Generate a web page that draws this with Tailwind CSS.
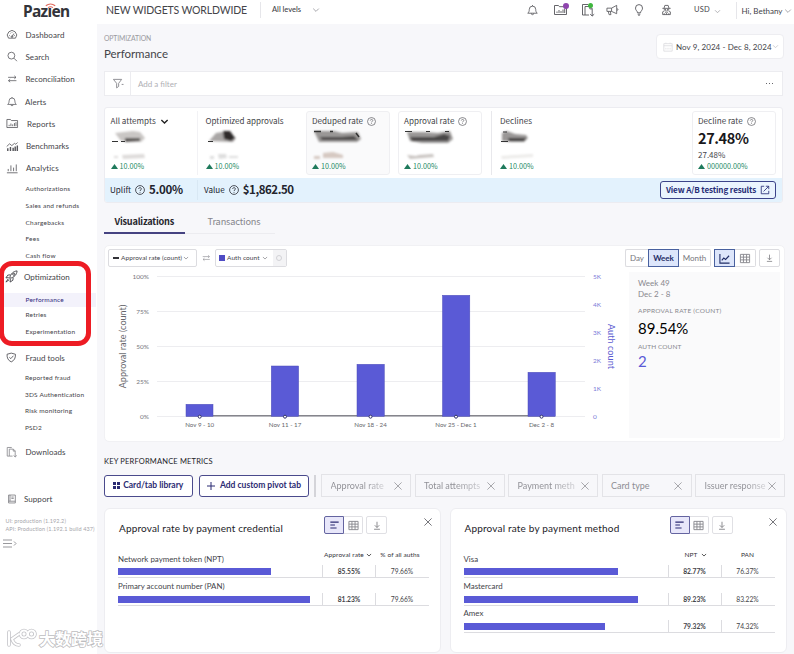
<!DOCTYPE html>
<html lang="en">

<head>
    <meta charset="UTF-8" />
    <title>Performance | Pazien</title>
    <meta name="viewport" content="width=device-width, initial-scale=1.0" />
    <script src="https://cdn.jsdelivr.net/npm/@tailwindcss/browser@4"></script>
</head>

<body class="w-[794px] h-[654px] overflow-hidden bg-[#f7f7fa] text-[#444449] font-['Lato',sans-serif] leading-none">
    <!-- Icon sprite -->
    <svg class="hidden">
        <symbol id="i-gauge" viewBox="0 0 12 12"><path d="M2.2 10A5 5 0 1 1 9.8 10ZM6 8.4 8 5M2.8 7h.8M4 4.4l.5.5M6 3.3v.7M9.2 7h-.8" /><circle cx="6" cy="8.3" r=".9" /></symbol>
        <symbol id="i-search" viewBox="0 0 12 12"><circle cx="5" cy="5" r="3.9" /><path d="M7.9 7.9 11.5 11.5" /></symbol>
        <symbol id="i-swap" viewBox="0 0 12 12"><path d="M1 4h9.5M8.5 2.2 10.5 4 8.5 5.8M11 8H1.5M3.5 6.2 1.5 8l2 1.8" /></symbol>
        <symbol id="i-bell" viewBox="0 0 12 12"><path d="M.8 9.5h10.4C9.8 8.3 9.5 7 9.5 5.3a3.5 3.5 0 0 0-7 0c0 1.7-.3 3-1.7 4.2ZM6 1.8V.6M4.7 9.7a1.3 1.4 0 0 0 2.6 0" /></symbol>
        <symbol id="i-reports" viewBox="0 0 14 12"><path d="M13 10.5H1v-9h4l1 1.200h7ZM3.500 9V7.500M5.500 9V6M7.500 9V7M9.500 9V5.500M11.200 9V4.500" /></symbol>
        <symbol id="i-bench" viewBox="0 0 14 12"><path d="M.8 6 4 3l2.500 2L9.500 2.500l1.500 1 2-2" /><path stroke-width="1.600" d="M2 11V8M5 11V6.500M8 11V7.500M10.300 11V6M12.700 11V5" /></symbol>
        <symbol id="i-bars" viewBox="0 0 14 12"><path d="M1 10.800h12M2.500 9V6.500M5.500 9V2.500M8.500 9V5M11.500 9V1.500" /></symbol>
        <symbol id="i-rocket" viewBox="0 0 14 14"><path d="M5 9C6 4 9 1.300 13 1c-.3 4-3 7-8 8ZM5.800 5.200 3 5.500 1 8.500l3-.3M8.800 8.200 8.500 11l-3 2 .3-3.200M3.500 9.500 1 13l3.500-2.500" /><circle cx="9.500" cy="4.500" r="1.200" /></symbol>
        <symbol id="i-shield" viewBox="0 0 12 12"><path d="M6 1 10.800 2.300C11 6.500 9.500 9.500 6 11 2.500 9.500 1 6.500 1.200 2.300ZM3.800 5.700l1.700 1.600L8.500 4" /></symbol>
        <symbol id="i-download-doc" viewBox="0 0 14 14"><path d="M4 12H1.500V1.500H7M4 3.500h5l2.200 2.200V8M4 3.500V12h4M11.200 8v5M9.200 11.200l2 1.800 2-1.800M8.800 3.500v2.400h2.400" /></symbol>
        <symbol id="i-book" viewBox="0 0 12 12"><path d="M2 1h8.500v10H2ZM3.800 1v7.800M2 8.800h8.500M5.500 3.500h3M5.500 5.300h3" /></symbol>
        <symbol id="i-megaphone" viewBox="0 0 14 12"><path d="M1 4h5l5.500-3v9L6 7.500H1ZM2.500 7.500 3.300 11h2L4.700 7.500M6 4v3.500M12 4.500c1.200.2 1.200 1.800 0 2" /></symbol>
        <symbol id="i-bulb" viewBox="0 0 12 12"><path d="M4.500 8.800C4.500 7 2.500 6.500 2.500 4.100a3.500 3.500 0 0 1 7 0C9.500 6.500 7.500 7 7.500 8.800ZM4.700 10.200h2.600M5.400 11.500h1.200" /></symbol>
        <symbol id="i-spy" viewBox="0 0 12 12"><path d="M1.500 4.200h9M3.300 4 4.200 1h3.600l.9 3M3.500 4.500c0 3.500 5 3.500 5 0M3.700 6.800 1.800 8v3h8.400V8L8.300 6.800M4.500 8 6 9.500 7.500 8M6 9.500V11M3.500 11V9.500M8.500 11V9.500M4.200 5.400h1.300M6.500 5.400h1.300" /></symbol>
        <symbol id="i-down" viewBox="0 0 8 8"><path d="M1.200 2.600 4 5.400l2.800-2.800" /></symbol>
        <symbol id="i-x" viewBox="0 0 8 8"><path d="m.4.4 7.200 7.200M7.600.4.4 7.600" /></symbol>
        <symbol id="i-help" viewBox="0 0 12 12"><circle cx="6" cy="6" r="5.300" /><path d="M4.400 4.800c0-2.200 3.300-2.100 3.300-.1C7.700 5.900 6 5.900 6 7.200M6 8.300v1" /></symbol>
        <symbol id="i-filter" viewBox="0 0 12 12"><path d="M1 1.500h9L6.700 5.800v3.400l-2.200 1.600v-5ZM10 7h2" /></symbol>
        <symbol id="i-cal" viewBox="0 0 12 12"><path d="M1 2h10v9H1ZM1 4.500h10M3.500 2V.8M8.500 2V.8M3.500 7v2M6 7v2M8.500 7v2" /></symbol>
        <symbol id="i-table" viewBox="0 0 12 12"><path d="M1 1.500h10v9H1ZM1 4.500h10M1 7.500h10M4.300 1.500v9M7.700 1.500v9" /></symbol>
        <symbol id="i-save" viewBox="0 0 12 12"><path d="M6 1.500v6.800M3.300 5.700 6 8.400l2.700-2.700M2.500 10.500h7" /></symbol>
        <symbol id="i-line" viewBox="0 0 12 12"><path d="M1 1v10h10.500M3 8l2.200-2.500 2 1.500L11 3" /></symbol>
        <symbol id="i-hbars" viewBox="0 0 12 12"><path d="M1 2.500h10M1 6h5.500M1 9.500h7.500" /></symbol>
        <symbol id="i-open" viewBox="0 0 12 12"><path d="M5 1.500H1.500v9h9V7M7 1.500h3.500V5M10.500 1.500 4.300 7.700" /></symbol>
    </svg>

    <div class="flex h-[654px]">
        <!-- Sidebar -->
        <aside class="w-[97px] shrink-0 bg-white text-[8px]">
            <div class="relative h-[23px] pl-[23px] text-[15.500px] leading-[22px] font-bold tracking-[-0.700px] text-[#33343a] font-['Noto_Sans','Open_Sans',sans-serif]">
                Pazıen
                <svg class="absolute left-[45px] top-[3px] w-[11px] h-[6px]" viewBox="0 0 11 6" fill="none" stroke="#e0685c" stroke-width="1.100"><path d="M.8 2.800Q5.500-.8 10.200 2.800M3 4.600q2.500-1.600 5 0" /></svg>
            </div>
            <nav class="pt-[0.500px] stroke-[#55555a] fill-none [stroke-width:0.9]">
                <div class="flex items-center h-[22.300px] pl-[6px] gap-[7.500px]"><svg class="w-[12px] h-[11px]"><use href="#i-gauge" /></svg><span class="tracking-[0.100px]">Dashboard</span></div>
                <div class="flex items-center h-[22.300px] pl-[7px] gap-[8px]"><svg class="w-[10.500px] h-[11px]"><use href="#i-search" /></svg><span class="tracking-[0.050px]">Search</span></div>
                <div class="flex items-center h-[22.300px] pl-[7px] gap-[8px]"><svg class="w-[10.500px] h-[10px]"><use href="#i-swap" /></svg><span>Reconciliation</span></div>
                <div class="flex items-center h-[22.300px] pl-[7px] gap-[8px]"><svg class="w-[10px] h-[11px]"><use href="#i-bell" /></svg><span class="tracking-[0.100px]">Alerts</span></div>
                <div class="flex items-center h-[22.300px] pl-[6px] gap-[8.500px]"><svg class="w-[12.500px] h-[11px]"><use href="#i-reports" /></svg><span class="tracking-[0.150px]">Reports</span></div>
                <div class="flex items-center h-[22.300px] pl-[6px] gap-[7.500px]"><svg class="w-[12.500px] h-[11px]"><use href="#i-bench" /></svg><span>Benchmarks</span></div>
                <div class="flex items-center h-[22.300px] pl-[6px] gap-[7.500px]"><svg class="w-[12.500px] h-[11px]"><use href="#i-bars" /></svg><span class="tracking-[0.100px]">Analytics</span></div>
            </nav>
            <div class="pl-[25.500px] pt-[1.500px] text-[6.500px] tracking-[0.230px]">
                <div class="flex items-center h-[16.700px]">Authorizations</div>
                <div class="flex items-center h-[16.700px]">Sales and refunds</div>
                <div class="flex items-center h-[16.700px]">Chargebacks</div>
                <div class="flex items-center h-[16.700px]">Fees</div>
                <div class="flex items-center h-[16.700px]">Cash flow</div>
            </div>
            <div class="flex items-center h-[24px] pl-[5px] gap-[6px] fill-none stroke-[#44444a]"><svg class="w-[13px] h-[13px]"><use href="#i-rocket" /></svg><span>Optimization</span></div>
            <div class="mt-[4px] text-[6.500px] tracking-[0.180px]">
                <div class="flex items-center h-[14.500px] w-[96px] pl-[25.500px] bg-[#f3f2fb] text-[#2f2a7c]">Performance</div>
                <div class="flex items-center h-[16.700px] pl-[25.500px]">Retries</div>
                <div class="flex items-center h-[16.700px] pl-[25.500px]">Experimentation</div>
            </div>
            <div class="flex items-center h-[20px] mt-[7.500px] pl-[6px] gap-[9px] fill-none stroke-[#55555a]"><svg class="w-[10.500px] h-[11px]"><use href="#i-shield" /></svg><span>Fraud tools</span></div>
            <div class="pl-[25px] mt-[2px] text-[6.500px] tracking-[0.180px]">
                <div class="flex items-center h-[16.600px]">Reported fraud</div>
                <div class="flex items-center h-[16.600px]">3DS Authentication</div>
                <div class="flex items-center h-[16.600px]">Risk monitoring</div>
                <div class="flex items-center h-[16.600px]">PSD2</div>
            </div>
            <div class="flex items-center h-[20px] mt-[5.500px] pl-[6px] gap-[8px] fill-none stroke-[#88888c]"><svg class="w-[11.500px] h-[12px]"><use href="#i-download-doc" /></svg><span class="tracking-[0.050px]">Downloads</span></div>
            <div class="flex items-center h-[20px] mt-[27.500px] pl-[7px] gap-[7.500px] fill-none stroke-[#77777c]"><svg class="w-[9.500px] h-[10px]"><use href="#i-book" /></svg><span class="tracking-[0.050px]">Support</span></div>
            <div class="mt-[9px] pl-[5.500px] text-[5.500px] leading-[7.500px] whitespace-nowrap tracking-[0.120px] text-[#a5a5aa]">
                <div>UI: production (1.192.2)</div>
                <div>API: Production (1.192.1 build 437)</div>
            </div>
            <svg class="ml-[3px] mt-[6px] w-[15px] h-[9px]" fill="none" stroke="#99999d" stroke-width="1"><path d="M0 1h9M0 4.500h9M0 8h9M11 2.500l2 2-2 2" /></svg>
        </aside>

        <!-- Page -->
        <div class="flex-1 min-w-0">
            <header class="flex items-center h-[24px] pb-[4px] bg-white">
                <div class="w-[163px] pl-[9px] text-[10.500px] whitespace-nowrap tracking-[-0.150px]">NEW WIDGETS WORLDWIDE</div>
                <div class="flex items-center h-[16px] w-[267px] border-l border-[#e6e6ea] pl-[11px] text-[7.500px]">
                    <span class="w-[40px] font-medium">All levels</span>
                    <svg class="w-[8px] h-[8px] fill-none stroke-[#a8a8ad]"><use href="#i-down" /></svg>
                </div>
                <div class="flex items-center w-[151px] fill-none stroke-[#55555a] [stroke-width:0.9]">
                    <svg class="w-[11px] h-[12px]"><use href="#i-bell" /></svg>
                    <div class="relative ml-[15px]">
                        <svg class="w-[15px] h-[12px]"><use href="#i-reports" /></svg>
                        <span class="absolute -right-[1px] -top-[1px] size-[6px] rounded-full bg-[#8e44ad]"></span>
                    </div>
                    <div class="relative ml-[13px]">
                        <svg class="w-[14px] h-[14px]"><use href="#i-download-doc" /></svg>
                        <span class="absolute right-[2px] top-0 size-[5px] rounded-full bg-[#3fb63f]"></span>
                    </div>
                    <svg class="ml-[11px] w-[13px] h-[12px]"><use href="#i-megaphone" /></svg>
                    <svg class="ml-[14px] w-[12px] h-[12px]"><use href="#i-bulb" /></svg>
                    <svg class="ml-[16px] w-[11px] h-[12px]"><use href="#i-spy" /></svg>
                </div>
                <div class="flex items-center ml-[16px] w-[42px] text-[7.500px] tracking-[0.200px]">
                    USD
                    <svg class="ml-[4px] mt-[2px] w-[7px] h-[7px] fill-none stroke-[#a8a8ad]"><use href="#i-down" /></svg>
                </div>
                <div class="flex items-center h-[17px] border-l border-[#e6e6ea] pl-[4.500px] pt-[1px] text-[8px] whitespace-nowrap">
                    Hi, Bethany
                    <svg class="ml-[2px] w-[8px] h-[8px] fill-none stroke-[#a8a8ad]"><use href="#i-down" /></svg>
                </div>
            </header>

            <main class="pl-[7px]">
                <div class="flex h-[47px]">
                    <div class="w-[552px] pt-[11px]">
                        <div class="text-[6.800px] text-[#9a9aa0] tracking-[-0.100px]">OPTIMIZATION</div>
                        <h1 class="mt-[6px] text-[11.500px] tracking-[-0.050px]">Performance</h1>
                    </div>
                    <div class="flex items-center mt-[10px] h-[25px] w-[128px] rounded-sm border border-[#ededf1] bg-white pl-[6px] text-[8px] whitespace-nowrap">
                        <svg class="w-[10px] h-[10px] fill-none stroke-[#dcdce0]"><use href="#i-cal" /></svg>
                        <span class="ml-[3px] tracking-[0.080px]">Nov 9, 2024 - Dec 8, 2024</span>
                        <svg class="w-[7px] h-[7px] fill-none stroke-[#c8c8cd]"><use href="#i-down" /></svg>
                    </div>
                </div>

                <!-- Filter bar -->
                <div class="flex items-center h-[25px] w-[679px] border border-[#ececf0] bg-white text-[8px]">
                    <div class="flex items-center justify-center w-[26px] h-full border-r border-[#ececf0]"><svg class="w-[12px] h-[11px] fill-none stroke-[#88888d]"><use href="#i-filter" /></svg></div>
                    <span class="ml-[7px] flex-1 text-[#b0b0b5]">Add a filter</span>
                    <span class="mr-[9px] flex gap-[1.500px]"><i class="size-[1.500px] bg-[#66666b]"></i><i class="size-[1.500px] bg-[#66666b]"></i><i class="size-[1.500px] bg-[#66666b]"></i></span>
                </div>

                <!-- KPI strip -->
                <section class="mt-[11px] w-[679px] rounded-[3px] border border-[#ececf1] bg-white overflow-hidden whitespace-nowrap font-['Noto_Sans_CJK_SC',sans-serif] text-[8.100px]">
                    <div class="flex h-[70px] pt-[3px]">
                        <div class="w-[93px] h-[64px] pl-[5.500px] pt-[6px] border-r border-[#f2f2f5]">
                            <div class="flex items-center h-[9px]">All attempts<svg class="ml-[4px] w-[9px] h-[9px] fill-none stroke-[#222] [stroke-width:1.2]"><use href="#i-down" /></svg></div>
                            <svg class="w-[60px] h-[36px]"><g filter="url(#smudge)"><path fill="#c9c6c4" d="M4 7 22 5l7 1 5 6-4 4-20-1Z" /><path fill="#5a5654" d="M14 12h15v3l-15 1Z" /><path fill="#dedbda" d="M3 30h4v2H3ZM11 29l22-1 1 4-22 1Z" /></g><path stroke="#333" d="M1 15.500h6M10 15.500h4" /></svg>
                            <div class="flex items-center gap-[2px] h-[9px] text-[7.200px] text-[#1f8a66]"><svg class="w-[7px] h-[5px]" fill="#1f7a5c"><path d="M3.500 0 7 5H0Z" /></svg>10.00%</div>
                        </div>
                        <div class="w-[108px] pl-[7.500px] pt-[6px]">
                            <div class="flex items-center h-[9px]">Optimized approvals</div>
                            <svg class="w-[60px] h-[36px]"><g filter="url(#smudge)"><path fill="#a9a6a5" d="M3 15 10 7l12-2 8 7-3 4Z" /><path fill="#2e2b2a" d="M17 5h7l5 7-4 3-7-2Z" /><path fill="#dedede" d="M4 30h4v3H4ZM12 28l8 0 1 4-8 1ZM23 30h9v2H23Z" /></g><path stroke="#333" d="M2 15.500h5" /></svg>
                            <div class="flex items-center gap-[2px] h-[9px] text-[7.200px] text-[#1f8a66]"><svg class="w-[7px] h-[5px]" fill="#1f7a5c"><path d="M3.500 0 7 5H0Z" /></svg>10.00%</div>
                        </div>
                        <div class="w-[84px] h-[64px] pl-[5px] pt-[5px] rounded-[3px] border border-[#efeff2] bg-[#fafafb]">
                            <div class="flex items-center h-[9px]">Deduped rate<svg class="ml-[4px] w-[9px] h-[9px] fill-none stroke-[#66666b]"><use href="#i-help" /></svg></div>
                            <svg class="w-[60px] h-[36px]"><g filter="url(#smudge)"><path fill="#9a9796" d="M2 5 22 5l8 2 16-1 3 7-4 3-26 0-12 0Z" /><path fill="#4a4746" d="M8 11h22l12-1 4 4H10Z" /><path fill="#d6c9c2" d="M2 30h6v3H2ZM11 27l10-1 10 3 0 3H11Z" /></g><path stroke="#333" stroke-width="1.500" d="M2 5.500h7M18 5.500h3M44 7l3 4" /></svg>
                            <div class="flex items-center gap-[2px] h-[9px] text-[7.200px] text-[#1f8a66]"><svg class="w-[7px] h-[5px]" fill="#1f7a5c"><path d="M3.500 0 7 5H0Z" /></svg>10.00%</div>
                        </div>
                        <div class="w-[84px] h-[64px] ml-[8px] pl-[5px] pt-[5px] rounded-[3px] border border-[#efeff2]">
                            <div class="flex items-center h-[9px]">Approval rate<svg class="ml-[4px] w-[9px] h-[9px] fill-none stroke-[#66666b]"><use href="#i-help" /></svg></div>
                            <svg class="w-[60px] h-[36px]"><g filter="url(#smudge)"><path fill="#9a9796" d="M3 6 20 6l14 1 12-2 3 8-5 4-26 0-12-2Z" /><path fill="#4a4746" d="M6 11h24l10-3 6 2-2 5H8Z" /><path fill="#c9c4c1" d="M3 29 12 30l3-1 14-1 1 3-24 2Z" /></g><path stroke="#333" d="M1 5.500h7M22 5.500h4M41 5.500h4" /></svg>
                            <div class="flex items-center gap-[2px] h-[9px] text-[7.200px] text-[#1f8a66]"><svg class="w-[7px] h-[5px]" fill="#1f7a5c"><path d="M3.500 0 7 5H0Z" /></svg>10.00%</div>
                        </div>
                        <div class="w-[201px] h-[64px] ml-[9px] pl-[8px] pt-[6px] border-l border-[#e8e8ec]">
                            <div class="flex items-center h-[9px]">Declines</div>
                            <svg class="w-[60px] h-[36px]"><g filter="url(#smudge)"><path fill="#9a9796" d="M2 7l5-2 8 3 11 1 2 3-4 4-12 0-10-1Z" /><path fill="#3e3b3a" d="M8 12h18l-2 3H9Z" /><path fill="#ecebe9" d="M1 30l32-2v3L2 33Z" /></g><path stroke="#333" d="M1 15.500h7M3 6h4" /></svg>
                            <div class="flex items-center gap-[2px] h-[9px] text-[7.200px] text-[#1f8a66]"><svg class="w-[7px] h-[5px]" fill="#1f7a5c"><path d="M3.500 0 7 5H0Z" /></svg>10.00%</div>
                        </div>
                        <div class="w-[84px] h-[64px] pl-[5px] pt-[5px] rounded-[3px] border border-[#efeff2]">
                            <div class="flex items-center h-[9px]">Decline rate<svg class="ml-[4px] w-[9px] h-[9px] fill-none stroke-[#66666b]"><use href="#i-help" /></svg></div>
                            <div class="flex items-center h-[15px] mt-[5px] text-[14.500px] tracking-[-0.400px] font-bold text-[#18181b]">27.48%</div>
                            <div class="flex items-center h-[9px] mt-[4px] text-[8px]">27.48%</div>
                            <div class="flex items-center gap-[2px] h-[9px] mt-[3px] text-[7.200px] text-[#1f8a66]"><svg class="w-[7px] h-[5px]" fill="#1f7a5c"><path d="M3.500 0 7 5H0Z" /></svg>000000.00%</div>
                        </div>
                    </div>
                    <div class="flex items-center h-[24px] bg-[#e3f2fd] text-[#22242e]">
                        <div class="flex items-center w-[93px] h-[20px] pl-[5px] border-r border-[#d8e8f4]">Uplift<svg class="mx-[4px] w-[10px] h-[10px] fill-none stroke-[#33343c]"><use href="#i-help" /></svg><b class="text-[11.500px] tracking-[-0.300px] font-bold">5.00%</b></div>
                        <div class="flex items-center flex-1 pl-[6px]">Value<svg class="mx-[4px] w-[10px] h-[10px] fill-none stroke-[#33343c]"><use href="#i-help" /></svg><b class="text-[11.500px] tracking-[-0.450px] font-bold">$1,862.50</b></div>
                        <button class="flex items-center justify-center gap-[4px] w-[116px] h-[18px] mr-[6px] rounded-[3px] border border-[#3b4389] bg-[#eaf4fe] text-[8.100px] font-bold tracking-[-0.130px] text-[#252b75]">View A/B testing results<svg class="w-[10px] h-[10px] fill-none stroke-[#252b75]"><use href="#i-open" /></svg></button>
                    </div>
                </section>

                <!-- Tabs -->
                <div class="flex h-[31px] font-['Noto_Sans_CJK_SC',sans-serif] text-[9.200px]">
                    <div class="flex items-center justify-center w-[80.500px] pt-[8px] border-b-2 border-[#454381] font-bold tracking-[-0.220px] text-[#26262c]">Visualizations</div>
                    <div class="flex items-center justify-center w-[90px] pl-[9px] pt-[7px] border-b border-[#ececf0] tracking-[-0.150px] text-[#85858b]">Transactions</div>
                </div>

                <!-- Chart card -->
                <section class="mt-[11px] w-[681px] h-[197px] rounded-[5px] border border-[#f1f1f4] bg-white pt-[3px] pl-[3px] pr-[4px]">
                    <div class="flex items-center h-[18px] text-[6.500px] whitespace-nowrap">
                        <div class="flex items-center w-[88.500px] h-[18px] pl-[4px] rounded-[2px] border border-[#dcdce0]"><i class="w-[6px] h-[1.500px] mr-[2px] bg-[#333338]"></i><span class="tracking-[0.070px]">Approval rate (count)</span><svg class="ml-[1px] w-[6px] h-[6px] fill-none stroke-[#88888d]"><use href="#i-down" /></svg></div>
                        <svg class="mx-[5px] w-[8.500px] h-[10px] fill-none stroke-[#99999e]"><use href="#i-swap" /></svg>
                        <div class="flex items-center w-[71.500px] h-[18px] pl-[3px] rounded-[2px] border border-[#dcdce0]"><i class="size-[6px] mr-[2px] bg-[#4f4cc4]"></i><span class="tracking-[0.070px]">Auth count</span><svg class="ml-[2px] w-[6px] h-[6px] fill-none stroke-[#88888d]"><use href="#i-down" /></svg><span class="ml-auto flex items-center justify-center w-[13px] h-full bg-[#f3f3f5]"><i class="size-[6px] rounded-full border-[1.500px] border-[#d2d2d6]"></i></span></div>
                        <div class="flex items-center ml-auto mr-[3px] text-[8px] text-[#77777d]">
                            <div class="flex items-center justify-center w-[23px] h-[18px] rounded-l-[2px] border border-r-0 border-[#dcdce0]">Day</div>
                            <div class="flex items-center justify-center w-[31px] h-[18px] border border-[#49619f] bg-[#dde6fb] font-bold text-[#1f2c66]">Week</div>
                            <div class="flex items-center justify-center w-[32px] h-[18px] rounded-r-[2px] border border-l-0 border-[#dcdce0]">Month</div>
                        </div>
                        <div class="flex items-center fill-none">
                            <div class="flex items-center justify-center w-[21px] h-[18px] border border-[#49619f] bg-[#dde6fb] stroke-[#1f2c66] [stroke-width:1.2]"><svg class="w-[11px] h-[11px]"><use href="#i-line" /></svg></div>
                            <div class="flex items-center justify-center w-[21px] h-[18px] mr-[3px] rounded-r-[2px] border border-l-0 border-[#dcdce0] stroke-[#88888d]"><svg class="w-[12px] h-[11px]"><use href="#i-table" /></svg></div>
                            <div class="flex items-center justify-center w-[21px] h-[18px] rounded-[2px] border border-[#dcdce0] stroke-[#77777c]"><svg class="w-[9px] h-[10px]"><use href="#i-save" /></svg></div>
                        </div>
                    </div>
                    <div class="flex">
                        <!-- Bars: auth count per period, 140px = 5K -->
                        <svg class="w-[521px] h-[173px]" viewBox="108 267 521 173">
                            <g stroke="#ededf0"><path d="M157 276.500H585M157 311.500H585M157 346.500H585M157 381.500H585M157 416.500H585" /></g>
                            <path d="M186 415.700H555" stroke="#85858c" stroke-width="1.500" />
                            <g fill="#5a5ad6" stroke="#4d4db8" stroke-width=".5">
                                <rect x="186" y="404.300" width="27" height="12" />
                                <rect x="271.300" y="366" width="27.300" height="50.300" />
                                <rect x="357" y="364.300" width="27.300" height="52" />
                                <rect x="442.500" y="295.300" width="27.300" height="121" />
                                <rect x="528" y="372.300" width="27.300" height="44" />
                            </g>
                            <g fill="#fff" stroke="#33336b"><circle cx="199.700" cy="416.700" r="1.500" /><circle cx="285" cy="416.700" r="1.500" /><circle cx="370.500" cy="416.700" r="1.500" /><circle cx="456" cy="416.700" r="1.500" /><circle cx="541.500" cy="416.700" r="1.500" /></g>
                            <g font-size="6.500" fill="#77777d" text-anchor="end"><text x="149" y="279">100%</text><text x="149" y="314">75%</text><text x="149" y="349">50%</text><text x="149" y="384">25%</text><text x="149" y="419">0%</text></g>
                            <g font-size="6.200" fill="#66666b" text-anchor="middle"><text x="199.700" y="427">Nov 9 - 10</text><text x="285" y="427">Nov 11 - 17</text><text x="370.500" y="427">Nov 18 - 24</text><text x="456" y="427">Nov 25 - Dec 1</text><text x="541.500" y="427">Dec 2 - 8</text></g>
                            <g font-size="6.500" fill="#7b7bd8"><text x="593" y="279">5K</text><text x="593" y="307">4K</text><text x="593" y="335">3K</text><text x="593" y="363">2K</text><text x="593" y="391">1K</text><text x="593" y="419">0</text></g>
                            <text transform="translate(125.500 346.500) rotate(-90)" font-size="9" letter-spacing=".05" fill="#66666b" text-anchor="middle">Approval rate (count)</text>
                            <text transform="translate(608 346.500) rotate(90)" font-size="9" letter-spacing=".1" fill="#5a5ad0" text-anchor="middle">Auth count</text>
                        </svg>
                        <div class="w-[151px] h-[166px] mt-[5px] pl-[9px] pt-[6px] bg-[#fafafb] text-[#88888e]">
                            <div class="text-[8px] leading-[11px]">Week 49<br />Dec 2 - 8</div>
                            <div class="mt-[8px] text-[6.500px] tracking-[0.250px]">APPROVAL RATE (COUNT)</div>
                            <div class="mt-[6px] text-[15px] text-[#000]">89.54%</div>
                            <div class="mt-[8px] text-[6.500px] tracking-[0.080px]">AUTH COUNT</div>
                            <div class="mt-[4px] text-[15px] text-[#5a5ad6]">2</div>
                        </div>
                    </div>
                </section>

                <!-- Metrics tabs -->
                <h2 class="mt-[16px] h-[8px] text-[7.500px] tracking-[0.180px] text-[#222228] whitespace-nowrap">KEY PERFORMANCE METRICS</h2>
                <div class="flex items-center mt-[8px] h-[23px] text-[9px] whitespace-nowrap">
                    <button class="flex items-center justify-center w-[88.500px] h-[22px] rounded-[3px] border border-[#4a4a8c] bg-white font-bold text-[8.500px] text-[#2b2b72]"><svg class="mr-[3px] w-[7px] h-[7px]" fill="#2b2b72"><path d="M0 0h3v3H0zM4 0h3v3H4zM0 4h3v3H0zM4 4h3v3H4z" /></svg>Card/tab library</button>
                    <button class="flex items-center justify-center w-[110px] h-[22px] ml-[6.500px] rounded-[3px] border border-[#4a4a8c] bg-white font-bold text-[8.500px] text-[#2b2b72]"><svg class="mr-[5px] w-[8px] h-[8px]" stroke="#2b2b72"><path d="M4 0v8M0 4h8" /></svg>Add custom pivot tab</button>
                    <i class="w-[1.500px] h-[22px] ml-[5px] mr-[5.500px] bg-[#d4d4d9]"></i>
                    <div class="flex gap-[3.500px] fill-none stroke-[#a8a8ad] text-[#8d8d93]">
                        <div class="flex items-center w-[90px] h-[23px] pl-[8.500px] border border-[#e3e3e7]"><span class="w-[63px] overflow-hidden bg-linear-to-r from-[#8d8d93] from-50% to-[#d8d8dc] to-90% bg-clip-text text-transparent leading-[12px]">Approval rate</span><svg class="w-[8px] h-[8px]"><use href="#i-x" /></svg></div>
                        <div class="flex items-center w-[90px] h-[23px] pl-[8.500px] border border-[#e3e3e7]"><span class="w-[63px] overflow-hidden bg-linear-to-r from-[#8d8d93] from-50% to-[#d8d8dc] to-95% bg-clip-text text-transparent leading-[12px]">Total attempts</span><svg class="w-[8px] h-[8px]"><use href="#i-x" /></svg></div>
                        <div class="flex items-center w-[90px] h-[23px] pl-[8.500px] border border-[#e3e3e7]"><span class="w-[63px] overflow-hidden bg-linear-to-r from-[#8d8d93] from-50% to-[#d8d8dc] to-95% bg-clip-text text-transparent leading-[12px]">Payment meth</span><svg class="w-[8px] h-[8px]"><use href="#i-x" /></svg></div>
                        <div class="flex items-center w-[90px] h-[23px] pl-[8.500px] border border-[#e3e3e7]"><span class="w-[63px] leading-[12px]">Card type</span><svg class="w-[8px] h-[8px]"><use href="#i-x" /></svg></div>
                        <div class="flex items-center w-[90px] h-[23px] pl-[8.500px] border border-[#e3e3e7]"><span class="w-[63px] overflow-hidden bg-linear-to-r from-[#8d8d93] from-60% to-[#d8d8dc] to-100% bg-clip-text text-transparent leading-[12px]">Issuer response</span><svg class="w-[8px] h-[8px]"><use href="#i-x" /></svg></div>
                    </div>
                </div>

                <!-- Metric cards -->
                <div class="flex gap-[8.500px] mt-[11px] whitespace-nowrap">
                    <section class="w-[337px] h-[145px] rounded-[6px] border border-[#ededf1] bg-white pl-[13px] pt-[7px]">
                        <div class="flex h-[31px] fill-none">
                            <h3 class="w-[206px] pt-[6.500px] pl-[1px] text-[10px] tracking-[0.150px] text-[#222228]">Approval rate by payment credential</h3>
                            <div class="flex items-center justify-center w-[20px] h-[18px] rounded-l-[2px] border border-[#6464a0] bg-[#e8e7fa] stroke-[#2b2b72] [stroke-width:1.3]"><svg class="w-[11px] h-[10px]"><use href="#i-hbars" /></svg></div>
                            <div class="flex items-center justify-center w-[19px] h-[18px] rounded-r-[2px] border border-l-0 border-[#e0e0e4] stroke-[#88888d]"><svg class="w-[11px] h-[11px]"><use href="#i-table" /></svg></div>
                            <div class="flex items-center justify-center w-[21px] h-[18px] ml-[3px] rounded-[2px] border border-[#e0e0e4] stroke-[#77777c]"><svg class="w-[10px] h-[11px]"><use href="#i-save" /></svg></div>
                            <svg class="ml-[36.500px] mt-[2px] w-[8px] h-[8px] stroke-[#77777c]"><use href="#i-x" /></svg>
                        </div>
                        <div class="flex items-center h-[10px] mt-[3px] pl-[203px] text-[6.500px] text-[#33333a]">
                            <div class="flex items-center justify-center w-[54px] tracking-[0.100px]">Approval rate<svg class="ml-[2px] w-[6px] h-[6px] fill-none stroke-[#222]"><use href="#i-down" /></svg></div>
                            <div class="w-[50px] text-center tracking-[0.100px]">% of all auths</div>
                        </div>
                        <div class="-mt-[6px] w-[311px] text-[7.900px]">
                            <div class="h-[24px] border-b border-[#dcdce0]">
                                <div class="h-[11px] pt-[2px]">Network payment token (NPT)</div>
                                <div class="flex h-[12px] text-[6.700px] text-center leading-[12px]"><div class="w-[204px] pt-[3px]"><div class="h-[6.500px] bg-[#5a5ad6]" style="width:153px"></div></div><div class="w-[53px] border-l border-[#dcdce0] font-bold">85.55%</div><div class="w-[53px] border-l border-[#dcdce0]">79.66%</div></div>
                            </div>
                            <div class="h-[28px] pt-[4px] border-b border-[#dcdce0]">
                                <div class="h-[11px] pt-[1px]">Primary account number (PAN)</div>
                                <div class="flex h-[12px] text-[6.700px] text-center leading-[12px]"><div class="w-[204px] pt-[3px]"><div class="h-[6.500px] bg-[#5a5ad6]" style="width:192px"></div></div><div class="w-[53px] border-l border-[#dcdce0] font-bold">81.23%</div><div class="w-[53px] border-l border-[#dcdce0]">79.66%</div></div>
                            </div>
                        </div>
                    </section>
                    <section class="w-[337px] h-[145px] rounded-[6px] border border-[#ededf1] bg-white pl-[13px] pt-[7px]">
                        <div class="flex h-[31px] fill-none">
                            <h3 class="w-[206px] pt-[6.500px] pl-[1px] text-[10px] tracking-[0.180px] text-[#222228]">Approval rate by payment method</h3>
                            <div class="flex items-center justify-center w-[20px] h-[18px] rounded-l-[2px] border border-[#6464a0] bg-[#e8e7fa] stroke-[#2b2b72] [stroke-width:1.3]"><svg class="w-[11px] h-[10px]"><use href="#i-hbars" /></svg></div>
                            <div class="flex items-center justify-center w-[19px] h-[18px] rounded-r-[2px] border border-l-0 border-[#e0e0e4] stroke-[#88888d]"><svg class="w-[11px] h-[11px]"><use href="#i-table" /></svg></div>
                            <div class="flex items-center justify-center w-[21px] h-[18px] ml-[3px] rounded-[2px] border border-[#e0e0e4] stroke-[#77777c]"><svg class="w-[10px] h-[11px]"><use href="#i-save" /></svg></div>
                            <svg class="ml-[36.500px] mt-[2px] w-[8px] h-[8px] stroke-[#77777c]"><use href="#i-x" /></svg>
                        </div>
                        <div class="flex items-center h-[10px] mt-[3px] pl-[205px] text-[6.500px] text-[#33333a]">
                            <div class="flex items-center justify-center w-[54px] tracking-[0.100px]">NPT<svg class="ml-[3px] w-[6px] h-[6px] fill-none stroke-[#222]"><use href="#i-down" /></svg></div>
                            <div class="w-[50px] text-center tracking-[0.100px]">PAN</div>
                        </div>
                        <div class="-mt-[6px] w-[311px] text-[7.900px]">
                            <div class="h-[24px] border-b border-[#dcdce0]">
                                <div class="h-[11px] pt-[2px]">Visa</div>
                                <div class="flex h-[12px] text-[6.700px] text-center leading-[12px]"><div class="w-[204px] pt-[3px]"><div class="h-[6.500px] bg-[#5a5ad6]" style="width:154.500px"></div></div><div class="w-[53px] border-l border-[#dcdce0] font-bold">82.77%</div><div class="w-[53px] border-l border-[#dcdce0]">76.37%</div></div>
                            </div>
                            <div class="h-[28px] pt-[4px] border-b border-[#dcdce0]">
                                <div class="h-[11px] pt-[1px]">Mastercard</div>
                                <div class="flex h-[12px] text-[6.700px] text-center leading-[12px]"><div class="w-[204px] pt-[3px]"><div class="h-[6.500px] bg-[#5a5ad6]" style="width:174px"></div></div><div class="w-[53px] border-l border-[#dcdce0] font-bold">89.23%</div><div class="w-[53px] border-l border-[#dcdce0]">83.22%</div></div>
                            </div>
                            <div class="h-[27px] pt-[3px] border-b border-[#dcdce0]">
                                <div class="h-[11px] pt-[1px]">Amex</div>
                                <div class="flex h-[12px] text-[6.700px] text-center leading-[12px]"><div class="w-[204px] pt-[3px]"><div class="h-[6.500px] bg-[#5a5ad6]" style="width:141.500px"></div></div><div class="w-[53px] border-l border-[#dcdce0] font-bold">79.32%</div><div class="w-[53px] border-l border-[#dcdce0]">74.32%</div></div>
                            </div>
                        </div>
                    </section>
                </div>
            </main>
        </div>
    </div>

    <svg class="absolute size-0"><filter id="smudge"><feGaussianBlur stdDeviation="1.100" /></filter></svg>

    <!-- Highlight around the Optimization group -->
    <div class="absolute left-[-1px] top-[261px] w-[92px] h-[85px] rounded-[13px] border-[5px] border-[#ed1c24]"></div>

    <!-- Watermark -->
    <div class="absolute left-[7px] top-[627px] flex items-center h-[22px] w-[100px]">
        <svg class="w-[30px] h-[20px]" viewBox="0 0 30 20" fill="none" stroke-linecap="round">
            <g stroke="#c4c4c8" stroke-width="3.600"><path d="M2 4v13M12 6 5 11q2 6 7 6" /><circle cx="17" cy="6" r="3.500" /><circle cx="24.500" cy="6" r="3.500" /></g>
            <g stroke="#fff" stroke-width="2"><path d="M2 4v13M12 6 5 11q2 6 7 6" /><circle cx="17" cy="6" r="3.500" /><circle cx="24.500" cy="6" r="3.500" /></g>
        </svg>
        <span class="ml-[2px] text-[16px] font-bold whitespace-nowrap text-white font-['Noto_Sans_CJK_SC',sans-serif] [-webkit-text-stroke:1.5px_#bdbdc0] [paint-order:stroke_fill]">大数跨境</span>
    </div>
</body>

</html>
